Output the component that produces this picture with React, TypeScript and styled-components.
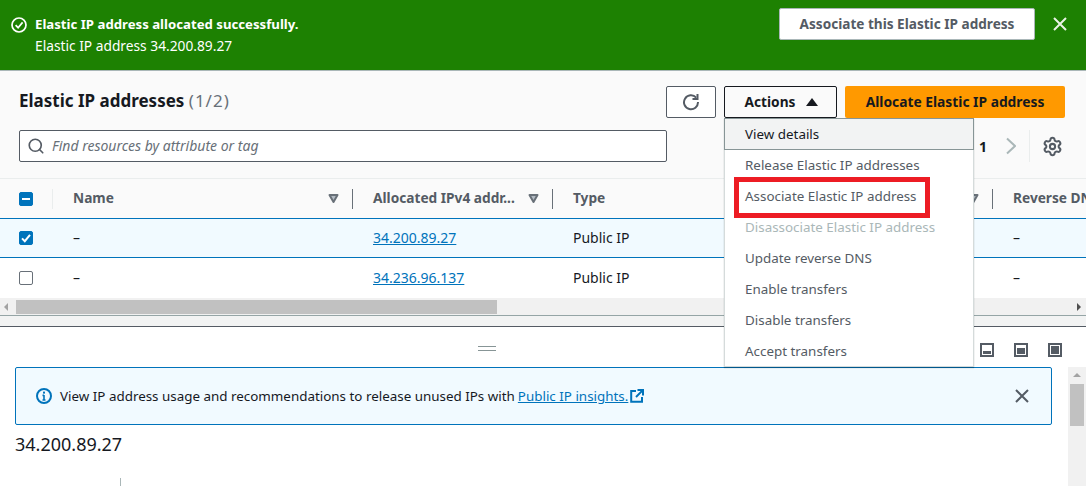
import React from "react";
import styled, { createGlobalStyle } from "styled-components";
import { Search, Settings } from "lucide-react";

const GlobalStyle = createGlobalStyle`
  html, body {
    margin: 0;
    padding: 0;
    background: #fff;
    overflow: hidden;
  }
  * {
    box-sizing: border-box;
  }
  body {
    font-family: "Noto Sans", "Open Sans", sans-serif;
    font-size: 14px;
    color: #16191f;
  }
`;

const Page = styled.div`
  position: relative;
  width: 1086px;
  height: 486px;
  overflow: hidden;
  display: flex;
  flex-direction: column;
`;

const Flash = styled.div`
  height: 71px;
  flex: none;
  background: #1d8102;
  border-bottom: 1px solid #aab7b8;
  color: #fff;
  display: flex;
  padding: 8px 19px 0 11px;
`;

const FlashIcon = styled.svg`
  width: 16px;
  height: 16px;
  margin: 9px 8px 0 0;
  flex: none;
`;

const FlashText = styled.div`
  flex: 1;
  padding-top: 6px;
  line-height: 21px;
  font-size: 13.75px;
`;

const FlashTitle = styled.div`
  font-weight: 700;
  font-size: 13.2px;
`;

const FlashButton = styled.button`
  width: 256px;
  height: 32px;
  border: 1px solid #aab7b8;
  border-radius: 2px;
  background: #fff;
  color: #545b64;
  font: 700 13.6px "Noto Sans", sans-serif;
  padding: 0 0 2px;
`;

const CrossIcon = styled.svg<{ $color: string }>`
  width: 14px;
  height: 14px;
  flex: none;
  display: block;
  fill: none;
  stroke: ${(p) => p.$color};
  stroke-width: 2;
`;

const FlashClose = styled.div`
  margin: 9px 0 0 18px;
`;

const Header = styled.div`
  height: 108px;
  flex: none;
  background: #fafafa;
  border-bottom: 1px solid #eaeded;
  padding: 15px 21px 0 19px;
`;

const TitleRow = styled.div`
  height: 32px;
  display: flex;
  align-items: center;
  gap: 8px;
`;

const Title = styled.h1`
  flex: 1;
  margin: 0;
  padding-bottom: 2px;
  font-size: 17px;
  font-weight: 700;
  line-height: 30px;
`;

const Counter = styled.span`
  letter-spacing: 1px;
  font-weight: 400;
  color: #687078;
`;

const ToolButton = styled.button<{ $dark?: boolean; $w: number }>`
  width: ${(p) => p.$w}px;
  height: 32px;
  border: 1px solid ${(p) => (p.$dark ? "#16191f" : "#545b64")};
  border-radius: 2px;
  background: ${(p) => (p.$dark ? "#fafafa" : "#fff")};
  color: ${(p) => (p.$dark ? "#16191f" : "#545b64")};
  font: 700 13.7px "Noto Sans", sans-serif;
  display: flex;
  align-items: center;
  justify-content: center;
  gap: 11px;
  padding: 0 0 1px ${(p) => (p.$dark ? 2 : 0)}px;
`;

const RefreshIcon = styled.svg`
  width: 18px;
  height: 18px;
  fill: none;
  stroke: #545b64;
  stroke-width: 2;
`;

const UpCaret = styled.span`
  width: 0;
  height: 0;
  border-left: 6px solid transparent;
  border-right: 6px solid transparent;
  border-bottom: 8px solid #16191f;
`;

const PrimaryButton = styled.button`
  width: 220px;
  height: 32px;
  border: none;
  border-radius: 2px;
  background: #ff9900;
  color: #16191f;
  font: 700 13.8px "Noto Sans", sans-serif;
  padding: 0 0 2px;
`;

const FilterRow = styled.div`
  display: flex;
  align-items: center;
  margin-top: 12px;
  height: 32px;
`;

const SearchBox = styled.div`
  width: 648px;
  height: 32px;
  border: 1px solid #545b64;
  border-radius: 2px;
  background: #fff;
  display: flex;
  align-items: center;
  padding: 0 0 1px 7px;
  gap: 7px;
  color: #687078;
  font-style: italic;
  font-size: 14px;
`;

const Pager = styled.div`
  margin-left: auto;
  margin-right: 2px;
  display: flex;
  align-items: center;
  height: 32px;
  color: #16191f;
  font-weight: 700;
`;

const PageNext = styled.svg`
  width: 10px;
  height: 18px;
  margin: 0 13px 0 19px;
  fill: none;
  stroke: #aab7b8;
  stroke-width: 2;
`;

const PagerDivider = styled.span`
  width: 1px;
  height: 32px;
  background: #eaeded;
  margin-right: 12px;
`;

const Gear = styled.span`
  display: flex;
  color: #545b64;
`;

const Row = styled.div<{ $kind: "head" | "selected" | "plain" }>`
  flex: none;
  display: grid;
  grid-template-columns: 52px 300px 200px 440px 1fr;
  align-items: center;
  overflow: hidden;
  height: ${(p) => (p.$kind === "head" ? 39 : 40)}px;
  background: ${(p) =>
    p.$kind === "head" ? "#fafafa" : p.$kind === "selected" ? "#f1faff" : "#fff"};
  border-top: ${(p) => (p.$kind === "selected" ? "1px solid #0073bb" : "0")};
  border-bottom: ${(p) => (p.$kind === "selected" ? "1px solid #0073bb" : "0")};
`;

const CheckCell = styled.div`
  display: flex;
  padding-left: 19px;
`;

const Check = styled.span<{ $on?: boolean }>`
  width: 14px;
  height: 14px;
  border-radius: 2px;
  border: 1px solid ${(p) => (p.$on ? "#0073bb" : "#687078")};
  background: ${(p) => (p.$on ? "#0073bb" : "#fff")};
  display: flex;
  align-items: center;
  justify-content: center;
`;

const HeadCell = styled.div<{ $faint?: boolean }>`
  display: flex;
  align-items: center;
  height: 20px;
  padding-left: 20px;
  padding-right: 13px;
  font-size: 13.7px;
  font-weight: 700;
  color: #545b64;
  white-space: nowrap;
  border-left: 1px solid ${(p) => (p.$faint ? "#eaeded" : "#687078")};
`;

const HeadLabel = styled.span`
  flex: 1;
  margin-top: -2px;
`;

const SortMark = styled.svg`
  width: 11px;
  height: 11px;
  flex: none;
`;

const Cell = styled.div`
  padding: 0 0 2px 21px;
  white-space: nowrap;
`;

const CellLink = styled.a`
  color: #0073bb;
  text-decoration: underline;
`;

const HScroll = styled.div`
  height: 18px;
  flex: none;
  background: #f1f1f1;
  border-bottom: 1px solid #95a5a6;
  display: flex;
  align-items: center;
  padding: 0 5px 0 4px;
`;

const ScrollArrow = styled.span<{ $dir: "left" | "right" | "up" }>`
  width: 0;
  height: 0;
  flex: none;
  ${(p) =>
    p.$dir === "left"
      ? "border-top: 4px solid transparent; border-bottom: 4px solid transparent; border-right: 4px solid #a3a3a3;"
      : p.$dir === "right"
        ? "border-top: 4px solid transparent; border-bottom: 4px solid transparent; border-left: 4px solid #505050;"
        : "border-left: 4px solid transparent; border-right: 4px solid transparent; border-bottom: 4px solid #a3a3a3;"}
`;

const HThumb = styled.div`
  width: 481px;
  height: 14px;
  margin-left: 8px;
  margin-right: auto;
  background: #c1c1c1;
`;

const Gutter = styled.div`
  height: 11px;
  flex: none;
  background: #f2f3f3;
  border-bottom: 1px solid #545b64;
`;

const Split = styled.div`
  flex: 1;
  display: flex;
  min-height: 0;
`;

const SplitBody = styled.div`
  flex: 1;
  min-width: 0;
  display: flex;
  flex-direction: column;
  padding: 0 16px 0 15px;
`;

const SplitTop = styled.div`
  height: 40px;
  flex: none;
  position: relative;
  display: flex;
  align-items: center;
  justify-content: center;
`;

const Handle = styled.span`
  width: 18px;
  height: 5px;
  margin-left: -93px;
  margin-top: 3px;
  border-top: 1px solid #879596;
  border-bottom: 1px solid #879596;
`;

const PanelModes = styled.div`
  position: absolute;
  right: -10px;
  top: 16px;
  display: flex;
  gap: 20px;
`;

const ModeIcon = styled.svg`
  width: 14px;
  height: 14px;
  display: block;
`;

const InfoAlert = styled.div`
  height: 58px;
  flex: none;
  border: 1px solid #0073bb;
  border-radius: 2px;
  background: #f1faff;
  display: flex;
  align-items: center;
  padding: 0 22px 0 20px;
  gap: 8px;
  white-space: nowrap;
  font-size: 13.4px;
`;

const InfoText = styled.span`
  flex: 1;
  display: flex;
  align-items: center;
  gap: 2px;
`;

const InfoLink = styled.a`
  color: #0073bb;
  text-decoration: underline;
  margin-left: 1px;
`;

const AddressTitle = styled.div`
  margin-top: 6px;
  font-size: 18px;
  line-height: 26px;
`;

const Tick = styled.div`
  width: 1px;
  height: 9px;
  margin: 21px 0 0 105px;
  background: #aab7b8;
`;

const VScroll = styled.div`
  width: 18px;
  flex: none;
  margin-top: 40px;
  background: #f1f1f1;
  display: flex;
  flex-direction: column;
  align-items: center;
  padding-top: 6px;
`;

const VThumb = styled.div`
  width: 14px;
  height: 42px;
  margin-top: 7px;
  background: #c1c1c1;
`;

const Menu = styled.div`
  position: absolute;
  left: 724px;
  top: 118px;
  width: 250px;
  height: 249px;
  background: #fff;
  border: 1px solid #d5dbdb;
  border-top: 0;
  box-shadow: 0 1px 1px rgba(0, 28, 36, 0.3);
  font-size: 13.4px;
`;

const MenuItem = styled.div<{ $active?: boolean; $disabled?: boolean }>`
  height: 31px;
  line-height: 30px;
  padding-left: 20px;
  white-space: nowrap;
  color: ${(p) => (p.$disabled ? "#aab7b8" : "#545b64")};
  ${(p) =>
    p.$active
      ? "margin-left:-1px;margin-right:-1px;padding-left:20px;height:32px;background:#f2f3f3;border:1px solid #879596;color:#16191f;"
      : ""}
`;

const Highlight = styled.div`
  position: absolute;
  left: 734px;
  top: 177px;
  width: 196px;
  height: 41px;
  border: 5px solid #ed1c24;
`;

const SortIcon = () => (
  <SortMark viewBox="0 0 11 11">
    <path d="M1.5 2h8L5.5 9z" fill="#b4bcc4" stroke="#687078" strokeWidth="2" strokeLinejoin="round" />
  </SortMark>
);

const Cross = ({ color }: { color: string }) => (
  <CrossIcon $color={color} viewBox="0 0 14 14">
    <path d="M1 1 13 13M13 1 1 13" />
  </CrossIcon>
);

const items = [
  "View details",
  "Release Elastic IP addresses",
  "Associate Elastic IP address",
  "Disassociate Elastic IP address",
  "Update reverse DNS",
  "Enable transfers",
  "Disable transfers",
  "Accept transfers",
];

export default function App() {
  return (
    <Page>
      <GlobalStyle />
      <Flash>
        <FlashIcon viewBox="0 0 16 16" fill="none" stroke="#fff" strokeWidth="1.7">
          <circle cx="8" cy="8" r="7" />
          <path d="M4.6 8.2 7.1 10.7 11.6 5.4" />
        </FlashIcon>
        <FlashText>
          <FlashTitle>Elastic IP address allocated successfully.</FlashTitle>
          <div>Elastic IP address 34.200.89.27</div>
        </FlashText>
        <FlashButton>Associate this Elastic IP address</FlashButton>
        <FlashClose>
          <Cross color="#eaf3e6" />
        </FlashClose>
      </Flash>

      <Header>
        <TitleRow>
          <Title>
            Elastic IP addresses <Counter>(1/2)</Counter>
          </Title>
          <ToolButton $w={50}>
            <RefreshIcon viewBox="0 0 18 18">
              <path d="M14.2 4.6A7 7 0 1 0 16 9" />
              <path d="M15.5 1v5h-5" />
            </RefreshIcon>
          </ToolButton>
          <ToolButton $w={113} $dark>
            Actions
            <UpCaret />
          </ToolButton>
          <PrimaryButton>Allocate Elastic IP address</PrimaryButton>
        </TitleRow>
        <FilterRow>
          <SearchBox>
            <Search size={18} strokeWidth={2.2} color="#545b64" />
            Find resources by attribute or tag
          </SearchBox>
          <Pager>
            1
            <PageNext viewBox="0 0 10 18">
              <path d="M1 1.5 9 9 1 16.5" />
            </PageNext>
            <PagerDivider />
            <Gear>
              <Settings size={21} strokeWidth={2.3} />
            </Gear>
          </Pager>
        </FilterRow>
      </Header>

      <Row $kind="head">
        <CheckCell>
          <Check $on>
            <svg width="10" height="10" viewBox="0 0 10 10">
              <path d="M1 5h8" stroke="#fff" strokeWidth="2" />
            </svg>
          </Check>
        </CheckCell>
        <HeadCell $faint>
          <HeadLabel>Name</HeadLabel>
          <SortIcon />
        </HeadCell>
        <HeadCell>
          <HeadLabel>Allocated IPv4 addr...</HeadLabel>
          <SortIcon />
        </HeadCell>
        <HeadCell>
          <HeadLabel>Type</HeadLabel>
          <SortIcon />
        </HeadCell>
        <HeadCell>
          <HeadLabel>Reverse DNS record</HeadLabel>
        </HeadCell>
      </Row>
      <Row $kind="selected">
        <CheckCell>
          <Check $on>
            <svg width="12" height="12" viewBox="0 0 12 12" fill="none">
              <path d="M2 6.4 4.8 9.2 10 2.8" stroke="#fff" strokeWidth="2" />
            </svg>
          </Check>
        </CheckCell>
        <Cell>–</Cell>
        <Cell>
          <CellLink>34.200.89.27</CellLink>
        </Cell>
        <Cell>Public IP</Cell>
        <Cell>–</Cell>
      </Row>
      <Row $kind="plain">
        <CheckCell>
          <Check />
        </CheckCell>
        <Cell>–</Cell>
        <Cell>
          <CellLink>34.236.96.137</CellLink>
        </Cell>
        <Cell>Public IP</Cell>
        <Cell>–</Cell>
      </Row>
      <HScroll>
        <ScrollArrow $dir="left" />
        <HThumb />
        <ScrollArrow $dir="right" />
      </HScroll>
      <Gutter />

      <Split>
        <SplitBody>
          <SplitTop>
            <Handle />
            <PanelModes>
              <ModeIcon viewBox="0 0 14 14">
                <rect x="1" y="1" width="12" height="12" fill="none" stroke="#545b64" strokeWidth="2" />
                <rect x="3" y="8" width="8" height="3" fill="#545b64" />
              </ModeIcon>
              <ModeIcon viewBox="0 0 14 14">
                <rect x="1" y="1" width="12" height="12" fill="none" stroke="#545b64" strokeWidth="2" />
                <rect x="3" y="5" width="8" height="6" fill="#545b64" />
              </ModeIcon>
              <ModeIcon viewBox="0 0 14 14">
                <rect x="1" y="1" width="12" height="12" fill="none" stroke="#545b64" strokeWidth="2" />
                <rect x="3" y="3" width="8" height="8" fill="#545b64" />
              </ModeIcon>
            </PanelModes>
          </SplitTop>
          <InfoAlert>
            <svg width="16" height="16" viewBox="0 0 16 16" fill="none">
              <circle cx="8" cy="8" r="7" stroke="#0073bb" strokeWidth="2" />
              <path d="M8 7v5M6.5 12h3M6.5 7.4H8" stroke="#0073bb" strokeWidth="1.6" />
              <rect x="7" y="3.6" width="2" height="2" fill="#0073bb" />
            </svg>
            <InfoText>
              View IP address usage and recommendations to release unused IPs with
              <InfoLink>Public IP insights.</InfoLink>
              <svg width="14" height="14" viewBox="0 0 14 14" fill="none">
                <path d="M6 2H1.2v10.8H12V8" stroke="#0073bb" strokeWidth="2" />
                <path d="M7.5 1H13v5.5M12.6 1.4 6 8" stroke="#0073bb" strokeWidth="2" />
              </svg>
            </InfoText>
            <Cross color="#545b64" />
          </InfoAlert>
          <AddressTitle>34.200.89.27</AddressTitle>
          <Tick />
        </SplitBody>
        <VScroll>
          <ScrollArrow $dir="up" />
          <VThumb />
        </VScroll>
      </Split>

      <Menu>
        {items.map((item, i) => (
          <MenuItem key={item} $active={i === 0} $disabled={i === 3}>
            {item}
          </MenuItem>
        ))}
      </Menu>
      <Highlight />
    </Page>
  );
}
